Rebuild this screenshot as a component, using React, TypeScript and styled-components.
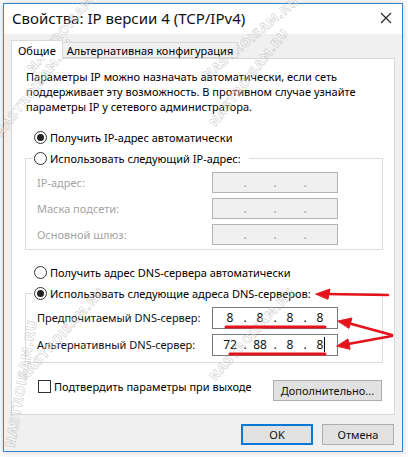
import React from "react";
import styled, { createGlobalStyle } from "styled-components";

const GlobalStyle = createGlobalStyle`
  html, body { margin: 0; padding: 0; background: #ffffff; }
  body { font-family: "Noto Sans", "Open Sans", sans-serif; font-size: 11px; color: #000; }
  * { box-sizing: border-box; }
`;

const Page = styled.div`
  position: relative;
  width: 408px;
  height: 457px;
  overflow: hidden;
  padding: 3px 0 0 3px;
  background: #fbfbfb;
`;

const Window = styled.div`
  width: 400px;
  height: 449px;
  border: 1px solid #3a86cc;
  background: #f0f0f0;
  display: flex;
  flex-direction: column;
  box-shadow: 0 0 6px rgba(0, 0, 0, 0.18);
`;

const TitleBar = styled.div`
  height: 30px;
  background: #ffffff;
  display: flex;
  align-items: center;
  justify-content: space-between;
  padding: 0 10px 2px 8px;
`;

const Title = styled.span`
  font-size: 15px;
  color: #111;
`;

const Body = styled.div`
  flex: 1;
  display: flex;
  flex-direction: column;
  padding: 6px 7px 0 7px;
`;

const Tabs = styled.div`
  display: flex;
  align-items: flex-end;
  height: 18px;
`;

const Tab = styled.div<{ $active?: boolean }>`
  height: ${(p) => (p.$active ? "19px" : "16px")};
  padding: 0 ${(p) => (p.$active ? "6px" : "4px")};
  display: flex;
  align-items: center;
  background: ${(p) => (p.$active ? "#ffffff" : "#f0f0f0")};
  border: 1px solid #d9d9d9;
  border-bottom: ${(p) => (p.$active ? "none" : "1px solid #d9d9d9")};
  border-left: ${(p) => (p.$active ? "1px solid #d9d9d9" : "none")};
  position: relative;
  z-index: ${(p) => (p.$active ? 2 : 1)};
  margin-bottom: ${(p) => (p.$active ? "-1px" : "0")};
  font-size: 11px;
`;

const Panel = styled.div`
  height: 357px;
  background: #ffffff;
  border: 1px solid #d9d9d9;
  display: flex;
  flex-direction: column;
  padding: 10px 0 0 0;
`;

const Description = styled.p`
  margin: 0 0 0 14px;
  line-height: 15px;
  font-size: 11px;
`;

const RadioRow = styled.label<{ $indent?: number; $top?: number }>`
  display: flex;
  align-items: center;
  height: 18px;
  margin-left: ${(p) => p.$indent ?? 22}px;
  margin-top: ${(p) => p.$top ?? 0}px;
  gap: 3px;
  font-size: 11px;
  white-space: nowrap;
`;

const RadioCircle = styled.span<{ $checked?: boolean }>`
  width: 13px;
  height: 13px;
  border-radius: 50%;
  border: 1px solid #333;
  background: #fff;
  display: inline-flex;
  align-items: center;
  justify-content: center;
  flex: none;
  &::after {
    content: "";
    width: 7px;
    height: 7px;
    border-radius: 50%;
    background: ${(p) => (p.$checked ? "#222" : "transparent")};
  }
`;

const Group = styled.fieldset<{ $top?: number; $bottom?: number }>`
  margin: ${(p) => p.$top ?? 0}px 11px 0 13px;
  padding: 2px 0 ${(p) => p.$bottom ?? 2}px 11px;
  border: 1px solid #dcdcdc;
  min-width: 0;
`;

const Legend = styled.legend`
  padding: 0 8px 0 1px;
  margin-left: -4px;
  height: 18px;
`;

const FieldGrid = styled.div<{ $row: number }>`
  display: grid;
  grid-template-columns: 175px 126px;
  grid-auto-rows: ${(p) => p.$row}px;
  align-items: center;
`;

const FieldLabel = styled.span<{ $disabled?: boolean }>`
  color: ${(p) => (p.$disabled ? "#a3a3a3" : "#111")};
  font-size: 11px;
  white-space: nowrap;
`;

const IpBox = styled.div<{ $disabled?: boolean; $h: number }>`
  height: ${(p) => p.$h}px;
  border: 1px solid ${(p) => (p.$disabled ? "#b4b4b4" : "#7a7a7a")};
  background: ${(p) => (p.$disabled ? "#f0f0f0" : "#ffffff")};
  display: flex;
  align-items: center;
  padding: 0 4px 0 4px;
  font-size: 12px;
  color: ${(p) => (p.$disabled ? "#9a9a9a" : "#111")};
`;

const Octet = styled.span`
  flex: 1;
  text-align: center;
  position: relative;
`;

const Dot = styled.span`
  width: 4px;
  text-align: center;
`;

const Caret = styled.span`
  position: absolute;
  width: 1px;
  height: 15px;
  background: #000;
  top: 1px;
  margin-left: 1px;
`;

const BottomRow = styled.div`
  display: flex;
  align-items: flex-start;
  justify-content: space-between;
  margin: 16px 12px 0 26px;
`;

const CheckRow = styled.label`
  display: flex;
  align-items: center;
  height: 15px;
  gap: 3px;
  font-size: 11px;
`;

const CheckBox = styled.span`
  width: 13px;
  height: 13px;
  border: 1px solid #333;
  background: #fff;
  flex: none;
`;

const Button = styled.button<{ $default?: boolean; $w: number }>`
  width: ${(p) => p.$w}px;
  height: 21px;
  margin-top: 1px;
  background: #e1e1e1;
  border: ${(p) => (p.$default ? "2px solid #0a78d7" : "1px solid #adadad")};
  font-family: "Noto Sans", "Open Sans", sans-serif;
  font-size: 11px;
  color: #111;
  padding: 0;
  display: flex;
  align-items: center;
  justify-content: center;
`;

const Footer = styled.div`
  display: flex;
  justify-content: flex-end;
  gap: 9px;
  margin-top: 8px;
  padding-right: 1px;
`;

const Overlay = styled.svg`
  position: absolute;
  left: 0;
  top: 0;
  pointer-events: none;
`;

const Watermark = styled.span<{ $x: number; $y: number; $r: number; $s?: number }>`
  position: absolute;
  left: ${(p) => p.$x}px;
  top: ${(p) => p.$y}px;
  transform: rotate(${(p) => p.$r}deg);
  transform-origin: left center;
  font-family: "DejaVu Sans", sans-serif;
  font-weight: bold;
  font-size: ${(p) => p.$s ?? 12}px;
  letter-spacing: 0.5px;
  color: rgba(255, 255, 255, 0.4);
  -webkit-text-stroke: 0.6px rgba(140, 140, 140, 0.45);
  white-space: nowrap;
  pointer-events: none;
`;

type IpProps = { values?: string[]; disabled?: boolean; h: number; caret?: boolean };

const IpField = ({ values, disabled, h, caret }: IpProps) => {
  const v = values ?? ["", "", "", ""];
  return (
    <IpBox $disabled={disabled} $h={h}>
      {v.map((o, i) => (
        <React.Fragment key={i}>
          {i > 0 && <Dot>.</Dot>}
          <Octet>
            {o}
            {caret && i === 3 && <Caret />}
          </Octet>
        </React.Fragment>
      ))}
    </IpBox>
  );
};

const CloseIcon = () => (
  <svg width="12" height="12" viewBox="0 0 12 12">
    <path d="M1 1L11 11M11 1L1 11" stroke="#222" strokeWidth="1.1" fill="none" />
  </svg>
);

export default function App() {
  return (
    <>
      <GlobalStyle />
      <Page>
        <Window>
          <TitleBar>
            <Title>Свойства: IP версии 4 (TCP/IPv4)</Title>
            <CloseIcon />
          </TitleBar>
          <Body>
            <Tabs>
              <Tab $active>Общие</Tab>
              <Tab>Альтернативная конфигурация</Tab>
            </Tabs>
            <Panel>
              <Description>
                Параметры IP можно назначать автоматически, если сеть
                <br />
                поддерживает эту возможность. В противном случае узнайте
                <br />
                параметры IP у сетевого администратора.
              </Description>
              <RadioRow $top={14}>
                <RadioCircle $checked />
                Получить IP-адрес автоматически
              </RadioRow>
              <Group $top={3}>
                <Legend>
                  <RadioRow $indent={0}>
                    <RadioCircle />
                    Использовать следующий IP-адрес:
                  </RadioRow>
                </Legend>
                <FieldGrid $row={26}>
                  <FieldLabel $disabled>IP-адрес:</FieldLabel>
                  <IpField disabled h={21} />
                  <FieldLabel $disabled>Маска подсети:</FieldLabel>
                  <IpField disabled h={21} />
                  <FieldLabel $disabled>Основной шлюз:</FieldLabel>
                  <IpField disabled h={21} />
                </FieldGrid>
              </Group>
              <RadioRow $top={13}>
                <RadioCircle />
                Получить адрес DNS-сервера автоматически
              </RadioRow>
              <Group $top={3} $bottom={4}>
                <Legend>
                  <RadioRow $indent={0}>
                    <RadioCircle $checked />
                    Использовать следующие адреса DNS-серверов:
                  </RadioRow>
                </Legend>
                <FieldGrid $row={27}>
                  <FieldLabel>Предпочитаемый DNS-сервер:</FieldLabel>
                  <IpField h={22} values={["8", "8", "8", "8"]} />
                  <FieldLabel>Альтернативный DNS-сервер:</FieldLabel>
                  <IpField h={22} values={["72", "88", "8", "8"]} caret />
                </FieldGrid>
              </Group>
              <BottomRow>
                <CheckRow>
                  <CheckBox />
                  Подтвердить параметры при выходе
                </CheckRow>
                <Button $w={109}>Дополнительно...</Button>
              </BottomRow>
            </Panel>
            <Footer>
              <Button $default $w={72}>OK</Button>
              <Button $w={72}>Отмена</Button>
            </Footer>
          </Body>
        </Window>

        <Watermark $x={30} $y={64} $r={-50}>NASTROISAM.RU</Watermark>
        <Watermark $x={205} $y={70} $r={-40}>NASTROISAM.RU</Watermark>
        <Watermark $x={-2} $y={128} $r={-52}>NASTROISAM.RU</Watermark>
        <Watermark $x={212} $y={118} $r={-52}>NASTROISAM.RU</Watermark>
        <Watermark $x={10} $y={440} $r={-80} $s={13}>NASTROISAM.RU</Watermark>
        <Watermark $x={22} $y={372} $r={-48}>NASTROISAM.RU</Watermark>
        <Watermark $x={212} $y={372} $r={-48}>NASTROISAM.RU</Watermark>

        <Overlay width="408" height="457" viewBox="0 0 408 457">
          <g stroke="#e3121b" fill="#e3121b" strokeLinecap="round">
            <line x1="388" y1="295" x2="326" y2="294" strokeWidth="2.5" />
            <polygon points="316,294 330,289 328,299" />
            <line x1="392" y1="335" x2="348" y2="323" strokeWidth="2.5" />
            <polygon points="338,321 352,318 349,328" />
            <line x1="392" y1="336" x2="348" y2="344" strokeWidth="2.5" />
            <polygon points="337,346 348,339 350,349" />
            <line x1="226" y1="327" x2="325" y2="327" strokeWidth="3" />
            <line x1="230" y1="354" x2="325" y2="354" strokeWidth="3" />
          </g>
        </Overlay>
      </Page>
    </>
  );
}
